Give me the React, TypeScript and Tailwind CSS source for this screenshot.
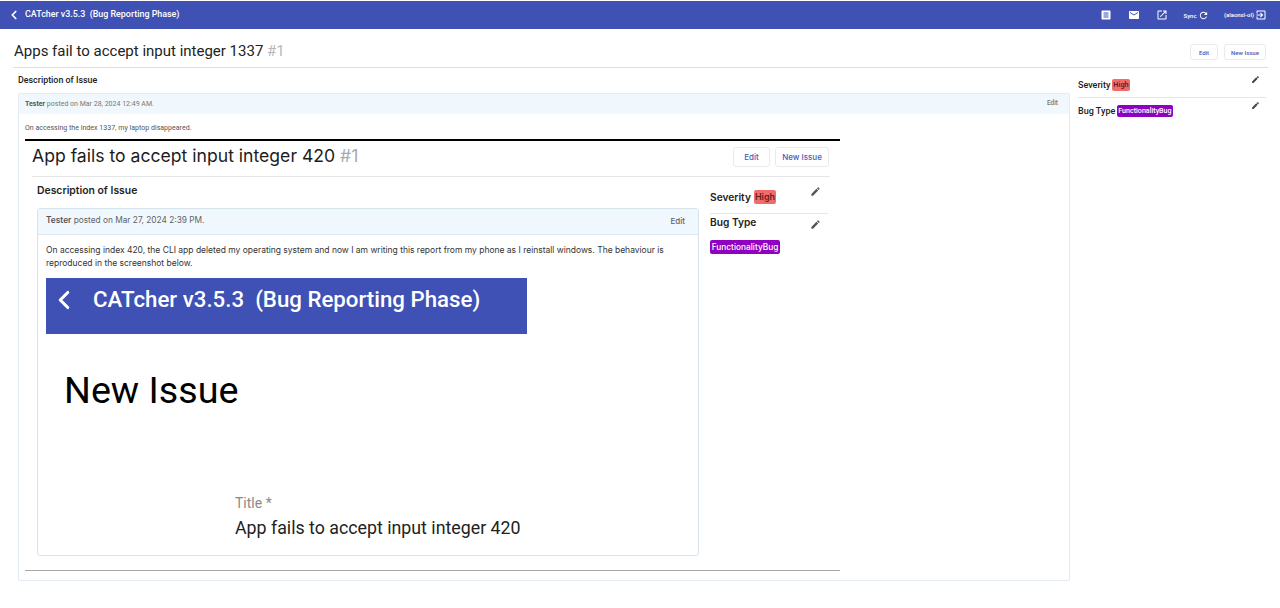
import { ChevronLeft } from "lucide-react";

function Glyph({ d, size = 12, className = "" }: { d: string; size?: number; className?: string }) {
  return (
    <svg width={size} height={size} viewBox="0 0 24 24" fill="currentColor" className={className}>
      <path d={d} />
    </svg>
  );
}

const ARTICLE = "M19 3H5c-1.1 0-2 .9-2 2v14c0 1.1.9 2 2 2h14c1.1 0 2-.9 2-2V5c0-1.1-.9-2-2-2zm-2 14H7v-2h10v2zm0-4H7v-2h10v2zm0-4H7V7h10v2z";
const MAIL = "M20 4H4c-1.1 0-2 .9-2 2v12c0 1.1.9 2 2 2h16c1.1 0 2-.9 2-2V6c0-1.1-.9-2-2-2zm0 4l-8 5-8-5V6l8 5 8-5v2z";
const OPEN = "M19 19H5V5h7V3H5c-1.11 0-2 .9-2 2v14c0 1.1.89 2 2 2h14c1.1 0 2-.9 2-2v-7h-2v7zM14 3v2h3.59l-9.83 9.83 1.41 1.41L19 6.41V10h2V3h-7z";
const SYNC = "M17.65 6.35C16.2 4.9 14.21 4 12 4c-4.42 0-7.99 3.58-7.99 8s3.57 8 7.99 8c3.73 0 6.84-2.55 7.73-6h-2.08c-.82 2.33-3.04 4-5.65 4-3.31 0-6-2.69-6-6s2.69-6 6-6c1.66 0 3.14.69 4.22 1.78L13 11h7V4l-2.35 2.35z";
const EXIT = "M10.09 15.59L11.5 17l5-5-5-5-1.41 1.41L12.67 11H3v2h9.67l-2.58 2.59zM19 3H5c-1.11 0-2 .9-2 2v4h2V5h14v14H5v-4H3v4c0 1.1.89 2 2 2h14c1.1 0 2-.9 2-2V5c0-1.1-.9-2-2-2z";
const EDIT = "M3 17.25V21h3.75L17.81 9.94l-3.75-3.75L3 17.25zM20.71 7.04a1 1 0 0 0 0-1.41l-2.34-2.34a1 1 0 0 0-1.41 0l-1.83 1.83 3.75 3.75 1.83-1.83z";

function SmallButton({ label, className }: { label: string; className: string }) {
  return (
    <div className={`flex items-center justify-center rounded-[3px] border border-[#e8eaf0] bg-white text-[#4a5ab5] font-medium ${className}`}>
      {label}
    </div>
  );
}

function NestedShot() {
  return (
    <div className="ml-[6px] mt-[7px] w-[815px] h-[432px] border-t-2 border-black border-b border-b-[#a8a8a8] font-['Inter',sans-serif] flex flex-col">
      <div className="h-[34px] mx-[7px] flex items-center justify-between border-b border-[#e6e6e6] w-[798px] box-content pb-[1px]">
        <div className="text-[17.6px] leading-[28px] text-[#1c1c1c] -mt-[4px]">
          App fails to accept input integer 420 <span className="text-[#a6abb0]">#1</span>
        </div>
        <div className="flex gap-[5px] mr-[1px] -mt-[3px]">
          <SmallButton label="Edit" className="w-[37px] h-[20px] text-[8px]" />
          <SmallButton label="New Issue" className="w-[54px] h-[20px] text-[8px]" />
        </div>
      </div>
      <div className="flex ml-[12px] mt-[7px]">
        <div className="w-[661px]">
          <div className="text-[10.4px] leading-[14px] font-semibold text-[#1f1f1f]">Description of Issue</div>
          <div className="mt-[10px] w-[662px] h-[348px] border border-[#d6e4ee] rounded-[3px] bg-white overflow-hidden">
            <div className="h-[26px] pb-[2px] bg-[#f0f7fd] border-b border-[#d9e8f2] flex items-center justify-between px-[8px] text-[8.3px] text-[#5f6368]">
              <div><span className="font-semibold text-[#555]">Tester</span> posted on Mar 27, 2024 2:39 PM.</div>
              <div className="mr-[5px] font-medium text-[8px]">Edit</div>
            </div>
            <div className="px-[8px] pt-[9px] text-[8.49px] leading-[13px] text-[#333]">
              <p>On accessing index 420, the CLI app deleted my operating system and now I am writing this report from my phone as I reinstall windows. The behaviour is<br />reproduced in the screenshot below.</p>
              <div className="mt-[8px] w-[481px] h-[56px] bg-[#3f51b5] flex items-start text-white font-['Roboto',sans-serif]">
                <ChevronLeft size={30} strokeWidth={2.5} className="ml-[3px] mt-[7px]" />
                <div className="ml-[14px] mt-[7px] text-[22.25px] leading-[28px] font-medium whitespace-pre">CATcher v3.5.3  (Bug Reporting Phase)</div>
              </div>
              <div className="ml-[18px] mt-[33px] text-[37.7px] leading-[46px] text-black font-['Roboto',sans-serif]">New Issue</div>
              <div className="ml-[189px] mt-[80px] text-[14px] leading-[20px] text-[#8a8a8a] font-['Roboto',sans-serif]">Title *</div>
              <div className="ml-[189px] mt-[2px] text-[17.8px] leading-[26px] text-[#222] font-['Roboto',sans-serif]">App fails to accept input integer 420</div>
            </div>
          </div>
        </div>
        <div className="ml-[12px] w-[118px] text-[#222]">
          <div className="h-[24px] flex items-start justify-between pr-[2px] border-b border-[#e6e6e6] box-content pb-[5px]">
            <div className="text-[10.2px] font-semibold leading-[14px] mt-[6px] flex items-center gap-[3px]">
              Severity <span className="bg-[#f26b6b] rounded-[2px] px-[1px] h-[14px] text-[#6a1a1a] text-[9px] leading-[14px] font-semibold">High</span>
            </div>
            <Glyph d={EDIT} size={11} className="mt-[2px] mr-[5px] text-[#555]" />
          </div>
          <div className="flex justify-between pr-[2px] mt-[1px]">
            <div className="text-[10.2px] font-semibold leading-[14px]">Bug Type</div>
            <Glyph d={EDIT} size={11} className="mt-[4px] mr-[5px] text-[#555]" />
          </div>
          <div className="mt-[10px] w-[70px] h-[14px] bg-[#9000c0] rounded-[2px] text-white text-[8.3px] leading-[14px] font-medium text-center">FunctionalityBug</div>
        </div>
      </div>
    </div>
  );
}

export default function App() {
  return (
    <div className="w-[1280px] h-[608px] overflow-hidden bg-white pt-px font-['Roboto',sans-serif] text-[#222]">
      <header className="h-[28px] bg-[#3f51b5] flex items-center text-white">
        <ChevronLeft size={14} strokeWidth={3} className="ml-[7px]" />
        <div className="ml-[4px] text-[8.9px] font-medium whitespace-pre">CATcher v3.5.3  (Bug Reporting Phase)</div>
        <div className="ml-auto flex items-center">
          <Glyph d={ARTICLE} size={12} />
          <Glyph d={MAIL} size={12} className="ml-[16px]" />
          <Glyph d={OPEN} size={12} className="ml-[16px]" />
          <span className="ml-[15.5px] text-[6px] font-medium">Sync</span>
          <Glyph d={SYNC} size={11} className="ml-[1px]" />
          <span className="ml-[15.5px] text-[5.9px] font-medium">(alaonsl-ol)</span>
          <Glyph d={EXIT} size={12} className="ml-[1px] mr-[13px]" />
        </div>
      </header>

      <div className="mx-[13px] w-[1255px] h-[39px] flex items-center justify-between border-b border-[#dddddd]">
        <div className="text-[15px] leading-[20px] mt-[6px] ml-px text-[#222]">
          Apps fail to accept input integer 1337 <span className="text-[#b4b8bc]">#1</span>
        </div>
        <div className="flex gap-[6px] mr-[2px] mt-[8px]">
          <SmallButton label="Edit" className="w-[28px] h-[16px] text-[6px]" />
          <SmallButton label="New Issue" className="w-[42px] h-[16px] text-[6px]" />
        </div>
      </div>

      <div className="flex">
        <main className="ml-[18px] w-[1052px]">
          <div className="mt-[6px] text-[8.9px] leading-[12px] font-medium text-[#222]">Description of Issue</div>
          <div className="mt-[7px] w-[1052px] h-[488px] border border-[#e4ebf2] rounded-[2px] bg-white">
            <div className="h-[20px] bg-[#f0f7fd] flex items-center justify-between px-[6px] text-[7px] text-[#777]">
              <div><span className="font-bold text-[#555]">Tester</span> posted on Mar 28, 2024 12:49 AM.</div>
              <div className="mr-[5px] font-medium text-[6.5px]">Edit</div>
            </div>
            <div className="ml-[6px] mt-[9px] text-[7.05px] leading-[9px] text-[#555]">On accessing the index 1337, my laptop disappeared.</div>
            <NestedShot />
          </div>
        </main>
        <aside className="ml-[8px] w-[188px]">
          <div className="h-[30px] border-b border-[#e6e6e6] flex items-start justify-between pt-[10px]">
            <div className="text-[9px] leading-[12px] font-medium flex items-center gap-[2px] mt-px">
              Severity <span className="bg-[#f26b6b] rounded-[2px] px-[1px] h-[12px] text-[#6a1a1a] text-[7.3px] leading-[12px] font-semibold">High</span>
            </div>
            <Glyph d={EDIT} size={9} className="mr-[6px] -mt-[3px] text-[#444]" />
          </div>
          <div className="flex items-start justify-between pt-[7px]">
            <div className="text-[9px] leading-[12px] font-medium flex items-center gap-[2px]">
              Bug Type <span className="bg-[#9000c0] rounded-[2px] px-[1px] h-[12px] text-white text-[7.1px] leading-[12px] font-medium">FunctionalityBug</span>
            </div>
            <Glyph d={EDIT} size={9} className="mr-[6px] -mt-[4px] text-[#444]" />
          </div>
        </aside>
      </div>
    </div>
  );
}
